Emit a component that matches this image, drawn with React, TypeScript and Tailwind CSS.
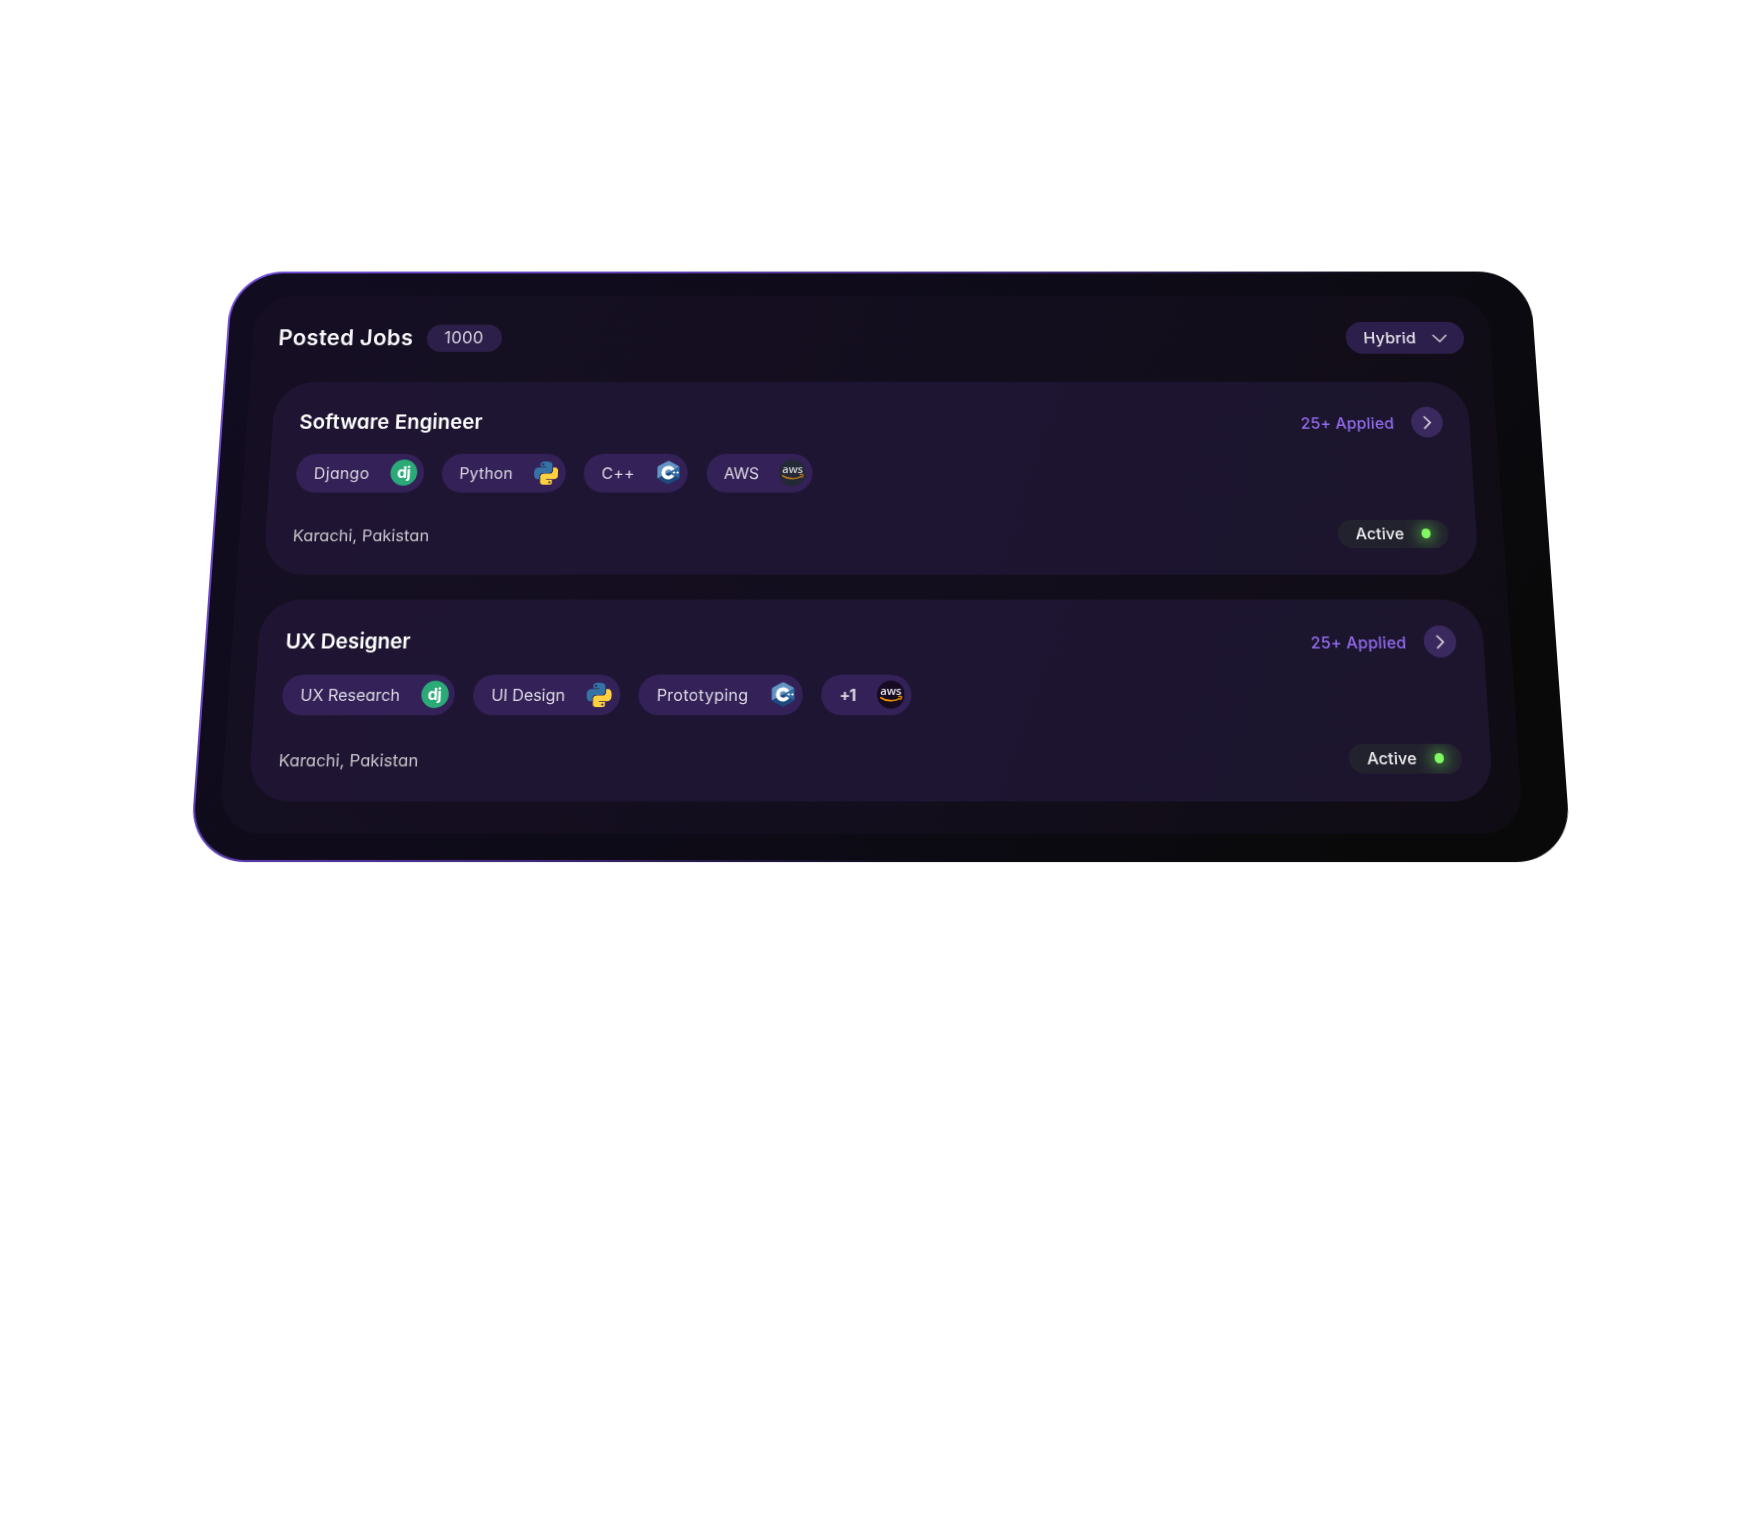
import React from "react";

type IconName = "django" | "python" | "cpp" | "aws" | "awsDark";
type Tag = { label: string; icon: IconName; box: string; text: string };
type Job = { title: string; titleClass: string; tags: Tag[] };

const jobs: Job[] = [
  {
    title: "Software Engineer",
    titleClass: "tracking-[0.15px]",
    tags: [
      { label: "Django", icon: "django", box: "w-[128.5px]", text: "tracking-[0.35px]" },
      { label: "Python", icon: "python", box: "w-[125.5px]", text: "tracking-[0.2px]" },
      { label: "C++", icon: "cpp", box: "w-[105.3px]", text: "tracking-[0.3px]" },
      { label: "AWS", icon: "aws", box: "w-[107.3px]", text: "tracking-[-0.3px]" },
    ],
  },
  {
    title: "UX Designer",
    titleClass: "tracking-[-0.05px]",
    tags: [
      { label: "UX Research", icon: "django", box: "w-[170px]", text: "tracking-[-0.05px]" },
      { label: "UI Design", icon: "python", box: "w-[144.9px]", text: "tracking-[-0.05px]" },
      { label: "Prototyping", icon: "cpp", box: "w-[162px]", text: "tracking-[0.25px]" },
      { label: "+1", icon: "awsDark", box: "w-[88.7px]", text: "font-bold tracking-[-1px]" },
    ],
  },
];

function DjangoIcon() {
  return (
    <span className="flex size-[27px] items-center justify-center rounded-full bg-[#2ba977]">
      <span className="-mt-[2px] text-[16px] leading-none font-bold tracking-[-0.5px] text-white">dj</span>
    </span>
  );
}

function PythonIcon() {
  return (
    <svg viewBox="0 0 24 24" className="mr-[1.5px] size-[24.5px]">
      <path
        fill="#3573a6"
        d="M14.25.18l.9.2.73.26.59.3.45.32.34.34.25.34.16.33.1.3.04.26.02.2-.01.13V8.5l-.05.63-.13.55-.21.46-.26.38-.3.31-.33.25-.35.19-.35.14-.33.1-.3.07-.26.04-.21.02H8.77l-.69.05-.59.14-.5.22-.41.27-.33.32-.27.35-.2.36-.15.37-.1.35-.07.32-.04.27-.02.21v3.06H3.17l-.21-.03-.28-.07-.32-.12-.35-.18-.36-.26-.36-.36-.35-.46-.32-.59-.28-.73-.21-.88-.14-1.05-.05-1.23.06-1.22.16-1.04.24-.87.32-.71.36-.57.4-.44.42-.33.42-.24.4-.16.36-.1.32-.05.24-.01h.16l.06.01h8.16v-.83H6.18l-.01-2.75-.02-.37.05-.34.11-.31.17-.28.25-.26.31-.23.38-.2.44-.18.51-.15.58-.12.64-.1.71-.06.77-.04.84-.02 1.27.05zm-6.3 1.98l-.23.33-.08.41.08.41.23.34.33.22.41.09.41-.09.33-.22.23-.34.08-.41-.08-.41-.23-.33-.33-.22-.41-.09-.41.09z"
      />
      <path
        fill="#ffd040"
        d="M21.04 6.11l.28.06.32.12.35.18.36.27.36.35.35.47.32.59.28.73.21.88.14 1.04.05 1.23-.06 1.23-.16 1.04-.24.86-.32.71-.36.57-.4.45-.42.33-.42.24-.4.16-.36.09-.32.05-.24.02-.16-.01h-8.22v.82h5.84l.01 2.76.02.36-.05.34-.11.31-.17.29-.25.25-.31.24-.38.2-.44.17-.51.15-.58.13-.64.09-.71.07-.77.04-.84.01-1.27-.04-1.07-.14-.9-.2-.73-.25-.59-.3-.45-.33-.34-.34-.25-.34-.16-.33-.1-.3-.04-.25-.02-.2.01-.13v-5.34l.05-.64.13-.54.21-.46.26-.38.3-.32.33-.24.35-.2.35-.14.33-.1.3-.06.26-.04.21-.02.13-.01h5.84l.69-.05.59-.14.5-.21.41-.28.33-.32.27-.35.2-.36.15-.36.1-.35.07-.32.04-.28.02-.21V6.07h2.09l.14.01zm-6.47 14.25l-.23.33-.08.41.08.41.23.33.33.23.41.08.41-.08.33-.23.23-.33.08-.41-.08-.41-.23-.33-.33-.23-.41-.08-.41.08z"
      />
    </svg>
  );
}

function CppIcon() {
  return (
    <svg viewBox="0 0 24 26" className="mr-[2px] h-[25px] w-[23px]">
      <path fill="#6295c6" d="M10.8.7a2.6 2.6 0 0 1 2.4 0l9 5.1c.5.3.9.8 1.1 1.3L12 13.2.7 19.3C.5 18.9.4 18.5.4 18V8c0-1 .5-1.8 1.3-2.2z" />
      <path fill="#1c4a7c" d="M.7 19.3 12 13l11.3 6.1c-.2.5-.6.9-1.1 1.2l-9 5a2.6 2.6 0 0 1-2.4 0l-9-5c-.5-.3-.9-.6-1.1-1z" />
      <path fill="#2d6ba3" d="M23.3 7.1c.2.3.3.7.3 1.1v9.9c0 .4-.1.7-.3 1L12 13z" />
      <path fill="none" stroke="#fff" strokeWidth="4" d="M16.7 10.3a5.4 5.4 0 1 0 0 5.4" />
      <path stroke="#fff" strokeWidth="1" d="M16.5 13h2.6M17.8 11.7v2.6M20.3 13h2.6M21.6 11.7v2.6" />
    </svg>
  );
}

function AwsIcon({ dark }: { dark?: boolean }) {
  const ink = dark ? "#e8e4ee" : "#cfd0d6";
  const smile = dark ? "#f29100" : "#b87420";
  return (
    <svg viewBox="0 0 28 28" className="size-[27.5px]">
      <circle cx="14" cy="14" r="14" fill={dark ? "#160b20" : "#242936"} />
      <text
        x="14"
        y="14"
        textAnchor="middle"
        fill={ink}
        fontSize="11.5"
        fontWeight="600"
        textLength="21.5"
        lengthAdjust="spacingAndGlyphs"
        fontFamily="Open Sans, sans-serif"
      >
        aws
      </text>
      <path fill="none" stroke={smile} strokeWidth="1.7" d="M3.3 16.8c6 4.2 14.5 4.2 20 .9" />
      <path fill="none" stroke={smile} strokeWidth="1.3" d="M21.3 16c1.5-.5 3-.5 3.400-.1.3.6-.2 2.200-1.200 3.300" />
    </svg>
  );
}

function TagIcon({ name }: { name: IconName }) {
  if (name === "django") return <DjangoIcon />;
  if (name === "python") return <PythonIcon />;
  if (name === "cpp") return <CppIcon />;
  return <AwsIcon dark={name === "awsDark"} />;
}

function JobCard({ job }: { job: Job }) {
  return (
    <article className="flex h-[199px] flex-col rounded-[40px] bg-linear-[110deg,#1f1532_0%,#1d1532_50%,#1c152c_100%] px-[27px] pt-[26.5px]">
      <div className="flex h-[32px] items-center justify-between">
        <h2 className={`mt-[1px] text-[20.5px] font-semibold text-white ${job.titleClass}`}>{job.title}</h2>
        <div className="flex items-center gap-[17.5px]">
          <span className="mt-[1px] text-[16px] font-medium tracking-[0.15px] text-[#926bee]">25+ Applied</span>
          <button className="flex size-[32px] items-center justify-center rounded-full bg-[#39295f]">
            <svg viewBox="0 0 10 16" className="ml-px h-[15px] w-[9px]" fill="none" stroke="#c9c5cf" strokeWidth="2">
              <path d="M1 1l7 7-7 7" />
            </svg>
          </button>
        </div>
      </div>
      <div className="mt-[16.5px] flex gap-[18.1px]">
        {job.tags.map((tag) => (
          <div
            key={tag.label}
            className={`flex h-[40.5px] items-center justify-between rounded-full bg-[#332157] pr-[6.5px] pl-[17.8px] ${tag.box}`}
          >
            <span className={`text-[16px] text-[#dcd8e5] ${tag.text}`}>{tag.label}</span>
            <TagIcon name={tag.icon} />
          </div>
        ))}
      </div>
      <div className="mt-[27.5px] flex h-[29px] items-center justify-between pr-[0.8px] pl-[0.6px]">
        <span className="mt-[4px] text-[16.5px] tracking-[0px] text-[#c8c5cc]">Karachi, Pakistan</span>
        <div className="flex h-[29px] w-[111.5px] items-center justify-between overflow-hidden rounded-full bg-[#22222e] pr-[18px] pl-[18px]">
          <span className="text-[16px] font-medium tracking-[0.1px] text-[#efeef1]">Active</span>
          <span className="size-[9.5px] rounded-full bg-[#80fa62] shadow-[0_0_13px_5px_rgba(92,200,70,0.5)]" />
        </div>
      </div>
    </article>
  );
}

export default function App() {
  return (
    <main className="flex h-[1515px] w-[1760px] items-start justify-center overflow-hidden bg-white pt-[238.4px] font-[Inter,sans-serif] [font-feature-settings:'cv11']">
      <div className="p-[20px] [transform:perspective(1650px)_rotateX(10deg)]">
        <section className="h-[598.6px] w-[1338.5px] rounded-[54px] bg-linear-[130deg,#7650dc_0%,#6643c4_20%,#3f2a7c_45%,#0d0b13_65%,#0a0a0a_100%] p-[2px]">
          <div className="h-full rounded-[52px] bg-linear-[130deg,#110c20_0%,#0e0b18_50%,#0b0a10_75%,#090909_90%] pt-[23.6px] pr-[42.5px] pl-[24.5px]">
            <div className="flex h-[546px] flex-col rounded-[40px] bg-linear-[115deg,#160f24_0%,#130e1e_50%,#100c14_100%] pr-[27px] pl-[26.5px]">
              <header className="mt-[28.5px] flex h-[34px] shrink-0 items-center justify-between">
                <div className="flex items-center">
                  <h1 className="w-[151.5px] text-[22.5px] font-semibold tracking-[0.35px] text-[#f7f6f8]">
                    Posted Jobs
                  </h1>
                  <span className="flex h-[29px] w-[77px] items-center justify-center rounded-full bg-[#2c1f4a] pt-[1px] text-[17px] tracking-[0.3px] text-[#d6d2dc]">
                    1000
                  </span>
                </div>
                <button className="flex h-[34px] w-[121px] items-center justify-between rounded-full bg-[#2d1f4c] pr-[17px] pl-[18px] text-[16.5px] font-medium tracking-[0.1px] text-[#e4e2e8]">
                  Hybrid
                  <svg viewBox="0 0 16 9" className="h-[9px] w-[16px]" fill="none" stroke="#c9c5cf" strokeWidth="1.7">
                    <path d="M1 1l7 7 7-7" />
                  </svg>
                </button>
              </header>
              <div className="mt-[29.5px] flex flex-col gap-[25px]">
                {jobs.map((job) => (
                  <JobCard key={job.title} job={job} />
                ))}
              </div>
            </div>
          </div>
        </section>
      </div>
    </main>
  );
}
